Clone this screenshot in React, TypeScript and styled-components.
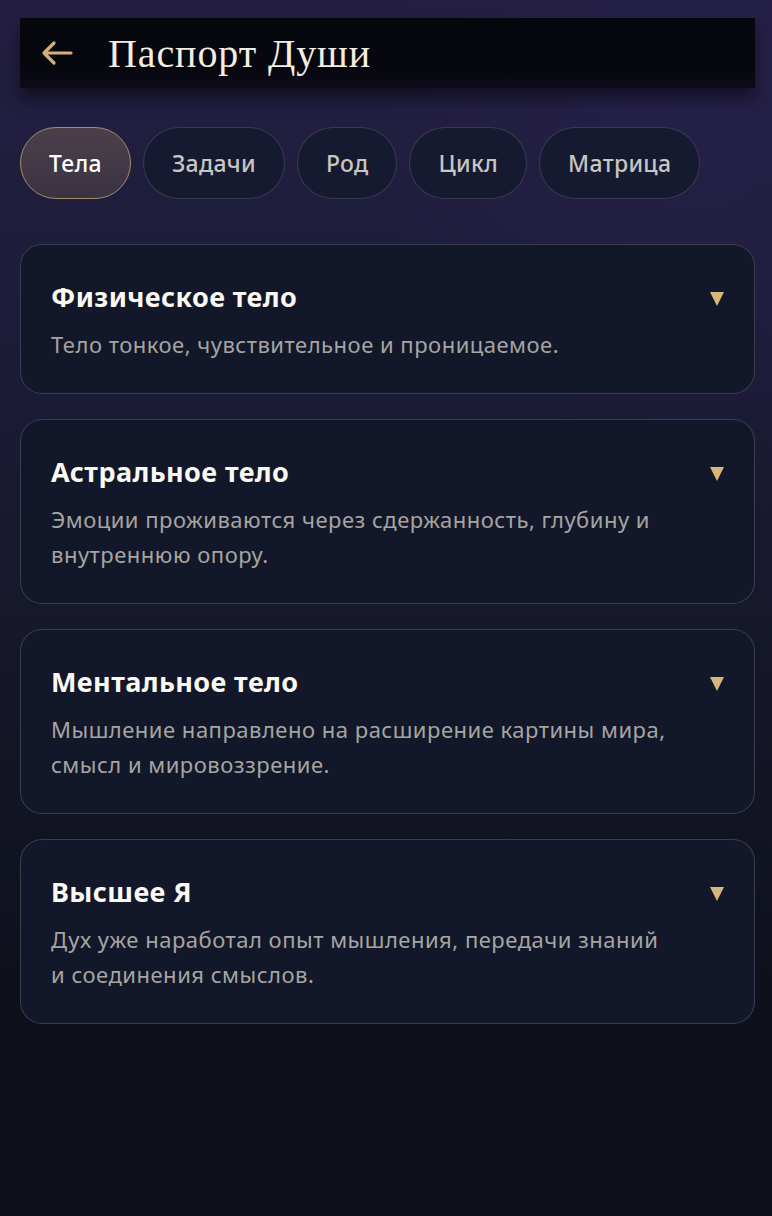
import React from 'react';
import styled, { createGlobalStyle } from 'styled-components';

const GlobalStyle = createGlobalStyle`
  html, body {
    margin: 0;
    padding: 0;
    background: #0e111c;
  }
  * {
    box-sizing: border-box;
  }
`;

const Page = styled.div`
  min-height: 1216px;
  padding: 18px 17px 40px 20px;
  background:
    radial-gradient(ellipse 60% 40% at 90% 10%, rgba(40, 34, 78, 0.55), transparent 70%),
    linear-gradient(180deg, #241f42 0%, #1d1c3a 25%, #151729 55%, #0e111c 80%, #0d101a 100%);
  font-family: 'Noto Sans', 'Liberation Sans', sans-serif;
`;

const Header = styled.header`
  display: flex;
  align-items: center;
  gap: 34px;
  height: 70px;
  padding: 0 20px;
  background: linear-gradient(180deg, #06060d 0%, #07070f 70%, #0c0b18 100%);
  box-shadow: 0 10px 14px rgba(6, 6, 14, 0.55);
`;

const BackButton = styled.button`
  display: flex;
  align-items: center;
  justify-content: center;
  padding: 0;
  border: none;
  background: none;
  cursor: pointer;
`;

const Title = styled.h1`
  margin: 0;
  font-family: 'Liberation Serif', 'DejaVu Serif', serif;
  font-weight: 400;
  font-size: 40px;
  color: #f3ede2;
  letter-spacing: 0.9px;
`;

const Tabs = styled.nav`
  display: flex;
  gap: 12px;
  margin-top: 39px;
`;

const Tab = styled.button<{ $active?: boolean }>`
  height: 72px;
  padding: 0 28px;
  border-radius: 36px;
  border: 1.5px solid ${(p) => (p.$active ? '#a58d6b' : 'rgba(120, 120, 140, 0.35)')};
  background: ${(p) =>
    p.$active ? 'linear-gradient(180deg, #4b3f4a 0%, #3b3342 100%)' : '#161a30'};
  color: ${(p) => (p.$active ? '#ffffff' : '#c9c6c2')};
  font-family: inherit;
  font-size: 23px;
  font-weight: 500;
  letter-spacing: 0.3px;
  cursor: pointer;
`;

const List = styled.div`
  display: flex;
  flex-direction: column;
  gap: 25px;
  margin-top: 45px;
`;

const Card = styled.section`
  display: flex;
  align-items: flex-start;
  padding: 34px 30px 31px 30px;
  border-radius: 22px;
  border: 1.5px solid rgba(140, 140, 160, 0.32);
  background: #121829;
`;

const CardBody = styled.div`
  flex: 1;
`;

const CardTitle = styled.h2`
  margin: 0;
  font-size: 27px;
  line-height: 36px;
  font-weight: 700;
  letter-spacing: 0.4px;
  color: #fbf8f2;
`;

const CardText = styled.p`
  margin: 12px 0 0;
  font-size: 22px;
  line-height: 35px;
  letter-spacing: 0.5px;
  color: #a7a4a1;
`;

const Caret = styled.span`
  margin-top: 13px;
  width: 0;
  height: 0;
  border-left: 7.5px solid transparent;
  border-right: 7.5px solid transparent;
  border-top: 14px solid #d8b679;
`;

const tabs = ['Тела', 'Задачи', 'Род', 'Цикл', 'Матрица'];

const bodies = [
  { title: 'Физическое тело', lines: ['Тело тонкое, чувствительное и проницаемое.'] },
  {
    title: 'Астральное тело',
    lines: ['Эмоции проживаются через сдержанность, глубину и', 'внутреннюю опору.'],
  },
  {
    title: 'Ментальное тело',
    lines: ['Мышление направлено на расширение картины мира,', 'смысл и мировоззрение.'],
  },
  {
    title: 'Высшее Я',
    lines: ['Дух уже наработал опыт мышления, передачи знаний', 'и соединения смыслов.'],
  },
];

const App = () => {
  return (
    <>
      <GlobalStyle />
      <Page>
        <Header>
          <BackButton aria-label="Назад">
            <svg width="34" height="26" viewBox="0 0 34 26" fill="none">
              <path
                d="M31 13H4M14 3L4 13l10 10"
                stroke="#d3b07a"
                strokeWidth="3.2"
                strokeLinecap="round"
                strokeLinejoin="round"
              />
            </svg>
          </BackButton>
          <Title>Паспорт Души</Title>
        </Header>

        <Tabs>
          {tabs.map((t, i) => (
            <Tab key={t} $active={i === 0}>
              {t}
            </Tab>
          ))}
        </Tabs>

        <List>
          {bodies.map((b) => (
            <Card key={b.title}>
              <CardBody>
                <CardTitle>{b.title}</CardTitle>
                <CardText>
                  {b.lines.map((l, i) => (
                    <React.Fragment key={i}>
                      {i > 0 && <br />}
                      {l}
                    </React.Fragment>
                  ))}
                </CardText>
              </CardBody>
              <Caret />
            </Card>
          ))}
        </List>
      </Page>
    </>
  );
};

export default App;
